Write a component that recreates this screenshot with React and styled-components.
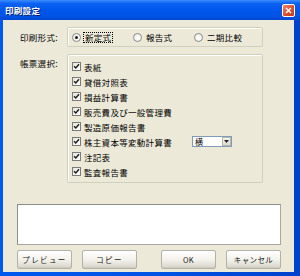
import React from "react";
import styled, { createGlobalStyle } from "styled-components";

// Page reset
const GlobalStyle = createGlobalStyle`
  html, body {
    margin: 0;
    padding: 0;
  }
  body {
    width: 300px;
    height: 276px;
    overflow: hidden;
    font-family: "Noto Sans CJK JP", "Noto Sans", sans-serif;
  }
`;

// XP style window frame
const Window = styled.div`
  width: 300px;
  height: 276px;
  display: flex;
  flex-direction: column;
  background: linear-gradient(90deg, #0058ee 0%, #0055e5 50%, #0041cc 100%);
  box-sizing: border-box;
`;

const TitleBar = styled.div`
  height: 20px;
  flex: none;
  display: flex;
  align-items: center;
  justify-content: space-between;
  padding: 0 5px 0 5px;
  background: linear-gradient(
    180deg,
    #3a8cff 0%,
    #0b61f0 18%,
    #0058ee 45%,
    #0054e6 80%,
    #0046d0 100%
  );
`;

const TitleText = styled.span`
  color: #fff;
  font-size: 8.5px;
  font-weight: bold;
  letter-spacing: 0.3px;
  text-shadow: 1px 1px 0 #0a1e6e;
`;

const CloseButton = styled.div`
  width: 13px;
  height: 13px;
  box-sizing: border-box;
  border: 1px solid #fff;
  border-radius: 2px;
  background: linear-gradient(135deg, #f08a6a 0%, #e0502c 50%, #c23a1a 100%);
  display: flex;
  align-items: center;
  justify-content: center;
`;

// Client area
const Body = styled.div`
  flex: 1;
  margin: 0 6px 4px 3px;
  background: #ece9d8;
  display: flex;
  flex-direction: column;
  padding-left: 14px;
`;

const FormRow = styled.div`
  display: grid;
  grid-template-columns: 50px 196px;
  margin-top: 7px;
`;

const FieldLabel = styled.span`
  padding-left: 3px;
  font-size: 8.5px;
  letter-spacing: 0.3px;
  color: #000;
  align-self: ${(p) => (p.top ? "start" : "center")};
  padding-top: ${(p) => (p.top ? "3px" : "0")};
`;

const GroupBox = styled.div`
  height: ${(p) => p.h}px;
  box-sizing: border-box;
  border: 1px solid #d0d0bf;
  border-radius: 2px;
  box-shadow: inset 1px 1px 0 #fff;
`;

const RadioRow = styled.div`
  display: flex;
  align-items: center;
  height: 100%;
  padding-left: 4px;
`;

const RadioItem = styled.div`
  width: 61px;
  display: flex;
  align-items: center;
  gap: 2px;
  font-size: 8.5px;
  letter-spacing: 0.3px;
`;

const RadioCircle = styled.span`
  width: 9px;
  height: 9px;
  box-sizing: border-box;
  border-radius: 50%;
  border: 1px solid #8a8a8a;
  background: radial-gradient(circle at 60% 60%, #fff 0%, #f0efe8 70%, #dcdad0 100%);
  display: flex;
  align-items: center;
  justify-content: center;
  flex: none;
  &::after {
    content: "";
    width: 3px;
    height: 3px;
    border-radius: 50%;
    background: ${(p) => (p.checked ? "#1a1a1a" : "transparent")};
  }
`;

const RadioLabel = styled.span`
  padding: 0 1px;
  border: 1px dotted ${(p) => (p.focused ? "#000" : "transparent")};
  line-height: 9px;
`;

const CheckList = styled.div`
  display: flex;
  flex-direction: column;
  padding: 4px 0 0 4px;
`;

const CheckRow = styled.div`
  height: 15px;
  display: grid;
  grid-template-columns: 12px 108px auto;
  align-items: center;
  font-size: 8.5px;
  letter-spacing: 0.3px;
`;

const CheckBox = styled.span`
  width: 9px;
  height: 9px;
  box-sizing: border-box;
  border: 1px solid #7a7a7a;
  background: linear-gradient(135deg, #e6e4da 0%, #fff 100%);
  display: flex;
  align-items: center;
  justify-content: center;
`;

const Select = styled.div`
  width: 40px;
  height: 11px;
  box-sizing: border-box;
  border: 1px solid #7f9db9;
  background: #fff;
  display: flex;
  align-items: center;
  justify-content: space-between;
  font-size: 8px;
  padding-left: 2px;
`;

const SelectArrow = styled.span`
  width: 9px;
  height: 9px;
  box-sizing: border-box;
  border: 1px solid #b8b6aa;
  background: linear-gradient(#f6f5ef, #dcd9cc);
  display: flex;
  align-items: center;
  justify-content: center;
`;

const TextArea = styled.div`
  margin-top: 21px;
  width: 264px;
  height: 41px;
  box-sizing: border-box;
  background: #fff;
  border: 1px solid #8c8c88;
  border-right-color: #a8a8a0;
  border-bottom-color: #a8a8a0;
`;

const ButtonRow = styled.div`
  margin-top: 5px;
  width: 264px;
  display: flex;
  justify-content: space-between;
`;

const ButtonGroup = styled.div`
  display: flex;
  gap: 10px;
`;

const Button = styled.div`
  width: 55px;
  height: 19px;
  box-sizing: border-box;
  border: 1px solid #b4b2a8;
  border-radius: 2px;
  background: linear-gradient(180deg, #ffffff 0%, #f3f2ec 50%, #dddbd0 90%, #c9c6ba 100%);
  display: flex;
  align-items: center;
  justify-content: center;
  font-size: 7.5px;
  letter-spacing: ${(p) => (p.wide ? "1.4px" : "0.4px")};
  color: #222;
`;

const CheckMark = () => (
  <svg width="7" height="7" viewBox="0 0 7 7">
    <path d="M1 3.2 L2.8 5 L6 1.2" fill="none" stroke="#1c1c1c" strokeWidth="1.4" />
  </svg>
);

const items = [
  "表紙",
  "貸借対照表",
  "損益計算書",
  "販売費及び一般管理費",
  "製造原価報告書",
  "株主資本等変動計算書",
  "注記表",
  "監査報告書",
];

const App = () => {
  return (
    <>
      <GlobalStyle />
      <Window>
        <TitleBar>
          <TitleText>印刷設定</TitleText>
          <CloseButton>
            <svg width="7" height="7" viewBox="0 0 7 7">
              <path d="M1 1 L6 6 M6 1 L1 6" stroke="#fff" strokeWidth="1.5" />
            </svg>
          </CloseButton>
        </TitleBar>
        <Body>
          <FormRow>
            <FieldLabel>印刷形式:</FieldLabel>
            <GroupBox h={20}>
              <RadioRow>
                <RadioItem>
                  <RadioCircle checked />
                  <RadioLabel focused>新定式</RadioLabel>
                </RadioItem>
                <RadioItem>
                  <RadioCircle />
                  <RadioLabel>報告式</RadioLabel>
                </RadioItem>
                <RadioItem>
                  <RadioCircle />
                  <RadioLabel>二期比較</RadioLabel>
                </RadioItem>
              </RadioRow>
            </GroupBox>
          </FormRow>
          <FormRow>
            <FieldLabel top>帳票選択:</FieldLabel>
            <GroupBox h={129}>
              <CheckList>
                {items.map((name, i) => (
                  <CheckRow key={name}>
                    <CheckBox>
                      <CheckMark />
                    </CheckBox>
                    <span>{name}</span>
                    {i === 5 && (
                      <Select>
                        <span>横</span>
                        <SelectArrow>
                          <svg width="5" height="3" viewBox="0 0 5 3">
                            <path d="M0 0 L5 0 L2.5 3 Z" fill="#222" />
                          </svg>
                        </SelectArrow>
                      </Select>
                    )}
                  </CheckRow>
                ))}
              </CheckList>
            </GroupBox>
          </FormRow>
          <TextArea />
          <ButtonRow>
            <ButtonGroup>
              <Button wide>プレビュー</Button>
              <Button wide>コピー</Button>
            </ButtonGroup>
            <ButtonGroup>
              <Button>OK</Button>
              <Button>キャンセル</Button>
            </ButtonGroup>
          </ButtonRow>
        </Body>
      </Window>
    </>
  );
};

export default App;
